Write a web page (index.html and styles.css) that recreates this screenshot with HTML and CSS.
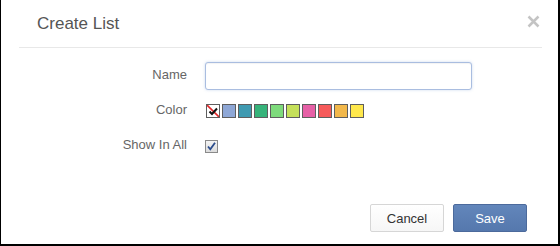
FILE: index.html
```html
<!DOCTYPE html>
<html>
<head>
<meta charset="utf-8">
<link rel="stylesheet" href="styles.css">
</head>
<body>
<div class="frame">
  <div class="modal">
    <div class="header">
      <h3 class="title">Create List</h3>
      <span class="close"><svg width="13" height="13" viewBox="0 0 13 13"><path d="M1.5 1.5L11.5 11.5M11.5 1.5L1.5 11.5" stroke="#c4c4c4" stroke-width="2.5" stroke-linecap="butt"/></svg></span>
    </div>
    <div class="form">
      <div class="row">
        <label class="label">Name</label>
        <input class="input" type="text">
      </div>
      <div class="row">
        <label class="label">Color</label>
        <div class="swatches">
          <span class="swatch none"><svg width="12" height="12" viewBox="0 0 12 12"><path d="M0 0L12 12" stroke="#e0282a" stroke-width="1.6"/><path d="M2.5 6.5L5 9L10 3.5" stroke="#111" stroke-width="2" fill="none"/></svg></span>
          <span class="swatch c1"></span>
          <span class="swatch c2"></span>
          <span class="swatch c3"></span>
          <span class="swatch c4"></span>
          <span class="swatch c5"></span>
          <span class="swatch c6"></span>
          <span class="swatch c7"></span>
          <span class="swatch c8"></span>
          <span class="swatch c9"></span>
        </div>
      </div>
      <div class="row">
        <label class="label">Show In All</label>
        <span class="check"><svg width="11" height="11" viewBox="0 0 11 11"><path d="M2 5.5L4.3 8.3L9 1.8" stroke="#2b4c8c" stroke-width="1.8" fill="none"/></svg></span>
      </div>
    </div>
    <div class="footer">
      <button class="btn">Cancel</button>
      <button class="btn primary">Save</button>
    </div>
  </div>
</div>
</body>
</html>
```
FILE: styles.css
```css
* { box-sizing: border-box; }
html, body { margin: 0; padding: 0; background: #fff; }
body { font-family: "Liberation Sans", Arial, sans-serif; }
.frame {
  width: 560px;
  height: 246px;
  border-left: 1px solid #000;
  border-right: 2px solid #000;
  border-bottom: 2px solid #000;
  background: #fff;
}
.modal {
  height: 100%;
  display: flex;
  flex-direction: column;
  padding: 0 16px 0 18px;
}
.header {
  height: 48px;
  border-bottom: 1px solid #e8e8e8;
  display: flex;
  align-items: center;
  justify-content: space-between;
  padding: 0 2px 0 18px;
}
.title {
  margin: 0;
  font-size: 17px;
  font-weight: normal;
  color: #555;
  line-height: 20px;
}
.close { display: flex; margin-top: -4px; }
.form {
  margin-top: 14px;
  display: flex;
  flex-direction: column;
  gap: 7px;
}
.row {
  height: 28px;
  display: flex;
  align-items: center;
  gap: 18px;
}
.label {
  width: 168px;
  text-align: right;
  font-size: 13px;
  line-height: 16px;
  color: #666;
  margin-top: -3px;
}
.input {
  width: 267px;
  height: 28px;
  margin: 0;
  border: 1px solid #a9bde0;
  border-radius: 3px;
  box-shadow: 0 0 3px rgba(110, 150, 210, 0.35), inset 0 1px 1px rgba(0,0,0,0.05);
  outline: none;
  background: #fff;
}
.swatches {
  display: flex;
  gap: 2px;
  margin-left: 1px;
}
.swatch {
  width: 14px;
  height: 14px;
  border: 1px solid #5e5e5e;
  display: block;
}
.none { background: #fff; }
.none svg { display: block; }
.c1 { background: #8ea7d6; }
.c2 { background: #3f9ab1; }
.c3 { background: #36b37a; }
.c4 { background: #7edb7c; }
.c5 { background: #c5e05a; }
.c6 { background: #e660a6; }
.c7 { background: #f65a5a; }
.c8 { background: #f2b84b; }
.c9 { background: #ffe84c; }
.check {
  width: 13px;
  height: 13px;
  border: 1px solid #8a8a8a;
  background: linear-gradient(#f4f4f4, #dcdcdc);
  display: flex;
  align-items: center;
  justify-content: center;
  margin-top: 1px;
}
.check svg { display: block; }
.footer {
  margin-top: auto;
  padding: 0 15px 12px 0;
  display: flex;
  justify-content: flex-end;
  gap: 9px;
}
.btn {
  width: 74px;
  height: 28px;
  font-family: "Liberation Sans", Arial, sans-serif;
  font-size: 13px;
  color: #333;
  border: 1px solid #d6d6d6;
  border-radius: 2px;
  background: linear-gradient(#ffffff, #f6f6f6);
  padding: 0;
}
.primary {
  color: #fff;
  border-color: #4c6a9c;
  background: linear-gradient(#6286bb, #5578ad);
}
```
